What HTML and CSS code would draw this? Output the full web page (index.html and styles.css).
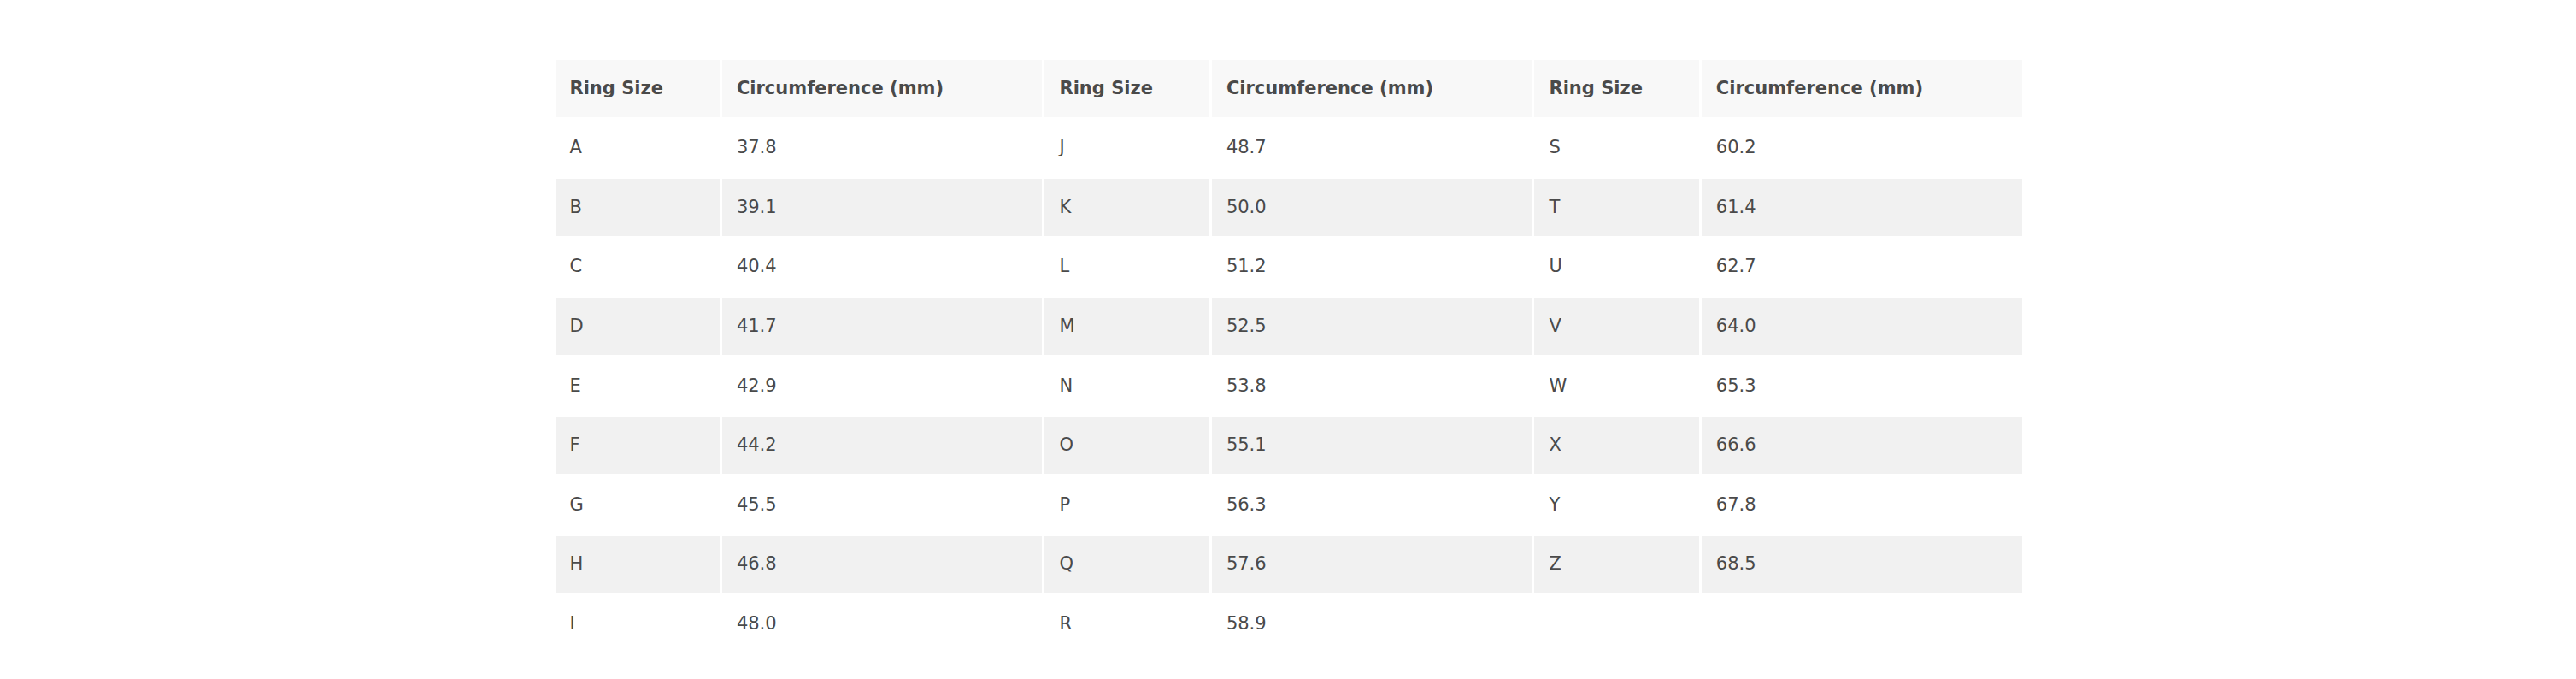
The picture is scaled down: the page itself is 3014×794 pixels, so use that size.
FILE: index.html
```html
<!DOCTYPE html>
<html lang="en">
<head>
<meta charset="utf-8">
<title>Ring Size Chart</title>
<link rel="stylesheet" href="styles.css">
</head>
<body>
<table class="size-table">
  <colgroup>
    <col class="col-size"><col class="col-circ">
    <col class="col-size"><col class="col-circ">
    <col class="col-size"><col class="col-circ">
  </colgroup>
  <thead>
    <tr>
      <th>Ring Size</th><th>Circumference (mm)</th>
      <th>Ring Size</th><th>Circumference (mm)</th>
      <th>Ring Size</th><th>Circumference (mm)</th>
    </tr>
  </thead>
  <tbody>
    <tr><td>A</td><td>37.8</td><td>J</td><td>48.7</td><td>S</td><td>60.2</td></tr>
    <tr><td>B</td><td>39.1</td><td>K</td><td>50.0</td><td>T</td><td>61.4</td></tr>
    <tr><td>C</td><td>40.4</td><td>L</td><td>51.2</td><td>U</td><td>62.7</td></tr>
    <tr><td>D</td><td>41.7</td><td>M</td><td>52.5</td><td>V</td><td>64.0</td></tr>
    <tr><td>E</td><td>42.9</td><td>N</td><td>53.8</td><td>W</td><td>65.3</td></tr>
    <tr><td>F</td><td>44.2</td><td>O</td><td>55.1</td><td>X</td><td>66.6</td></tr>
    <tr><td>G</td><td>45.5</td><td>P</td><td>56.3</td><td>Y</td><td>67.8</td></tr>
    <tr><td>H</td><td>46.8</td><td>Q</td><td>57.6</td><td>Z</td><td>68.5</td></tr>
    <tr><td>I</td><td>48.0</td><td>R</td><td>58.9</td><td></td><td></td></tr>
  </tbody>
</table>
</body>
</html>
```
FILE: styles.css
```css
html, body {
  margin: 0;
  padding: 0;
  background: #ffffff;
}

body {
  padding-left: 1px;
  font-family: "DejaVu Sans", Verdana, sans-serif;
  color: #4a4a4a;
}

.size-table {
  margin: 67px auto 0;
  border-collapse: separate;
  border-spacing: 3px;
  table-layout: fixed;
  width: 1722px;
  font-size: 21px;
}

.col-size { width: 192.4px; }
.col-circ { width: 374.6px; }

.size-table th,
.size-table td {
  height: 66.6px;
  padding: 0 16px 0 17px;
  box-sizing: border-box;
  text-align: left;
  vertical-align: middle;
  line-height: 1.2;
  white-space: nowrap;
}

.size-table th {
  font-weight: bold;
  background: #f8f8f8;
}

.size-table tbody tr:nth-child(even) td {
  background: #f1f1f1;
}
```
